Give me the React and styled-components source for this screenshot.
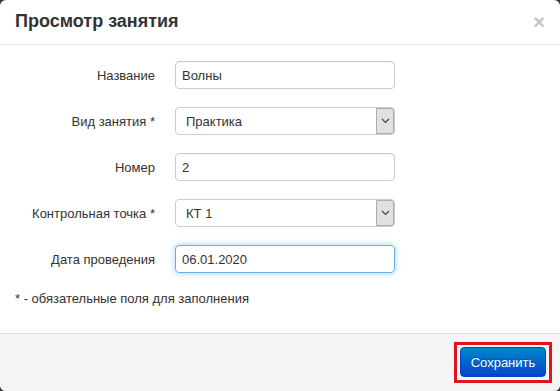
import React from "react";
import styled, { createGlobalStyle } from "styled-components";

const Global = createGlobalStyle`
  html, body { margin: 0; padding: 0; background: #3a3a3a; }
  body { font-family: "Liberation Sans", Arial, sans-serif; }
`;

const fields = [
  { label: "Название", value: "Волны" },
  { label: "Вид занятия *", value: "Практика", select: true },
  { label: "Номер", value: "2" },
  { label: "Контрольная точка *", value: "КТ 1", select: true },
  { label: "Дата проведения", value: "06.01.2020", focus: true },
];

const App = () => {
  return (
    <>
      <Global />
      <Modal>
        <Header>
          <Title>Просмотр занятия</Title>
          <Close>×</Close>
        </Header>
        <Body>
          <Form>
            {fields.map((f) => (
              <React.Fragment key={f.label}>
                <Label>{f.label}</Label>
                {f.select ? (
                  <Select>
                    <span>{f.value}</span>
                    <Arrow>
                      <svg width="9" height="6" viewBox="0 0 9 6">
                        <path d="M1 1 L4.5 4.5 L8 1" fill="none" stroke="#444" strokeWidth="1.2" />
                      </svg>
                    </Arrow>
                  </Select>
                ) : (
                  <Input $focus={f.focus}>{f.value}</Input>
                )}
              </React.Fragment>
            ))}
          </Form>
          <Note>* - обязательные поля для заполнения</Note>
        </Body>
        <Footer>
          <Highlight>
            <SaveButton>Сохранить</SaveButton>
          </Highlight>
        </Footer>
      </Modal>
    </>
  );
};

export default App;

const Modal = styled.div`
  width: 560px;
  height: 391px;
  background: #fff;
  border-radius: 6px;
  overflow: hidden;
  display: flex;
  flex-direction: column;
`;

const Header = styled.div`
  height: 44px;
  border-bottom: 1px solid #e5e5e5;
  display: flex;
  align-items: center;
  justify-content: space-between;
  padding: 0 15px;
`;

const Title = styled.h3`
  margin: 0;
  font-size: 18px;
  font-weight: bold;
  color: #333;
  padding-bottom: 1px;
`;

const Close = styled.span`
  font-size: 20px;
  font-weight: bold;
  color: #c4c4c4;
  line-height: 1;
`;

const Body = styled.div`
  flex: 1;
  padding: 16px 15px 0;
`;

const Form = styled.div`
  display: grid;
  grid-template-columns: 140px 220px;
  column-gap: 20px;
  row-gap: 18px;
  align-items: center;
`;

const Label = styled.div`
  text-align: right;
  font-size: 13px;
  color: #333;
`;

const Input = styled.div`
  box-sizing: border-box;
  height: 28px;
  border: 1px solid ${(p) => (p.$focus ? "#66afe9" : "#ccc")};
  border-radius: 4px;
  box-shadow: ${(p) => (p.$focus ? "0 0 6px rgba(102,175,233,0.6)" : "inset 0 1px 1px rgba(0,0,0,0.04)")};
  padding: 0 6px;
  display: flex;
  align-items: center;
  font-size: 13px;
  color: #333;
`;

const Select = styled.div`
  box-sizing: border-box;
  height: 28px;
  border: 1px solid #ccc;
  border-radius: 4px;
  display: flex;
  align-items: stretch;
  font-size: 13px;
  color: #333;
  span {
    flex: 1;
    display: flex;
    align-items: center;
    padding-left: 10px;
  }
`;

const Arrow = styled.div`
  width: 16px;
  background: #e1e1e1;
  border: 1px solid #adadad;
  border-radius: 0 3px 3px 0;
  display: flex;
  align-items: center;
  justify-content: center;
`;

const Note = styled.div`
  margin-top: 18px;
  font-size: 13px;
  color: #333;
`;

const Footer = styled.div`
  height: 57px;
  background: #f5f5f5;
  border-top: 1px solid #ddd;
  display: flex;
  align-items: center;
  justify-content: flex-end;
  padding: 0 8px 0 0;
`;

const Highlight = styled.div`
  border: 3px solid #e0141e;
  padding: 2px 3px 3px;
  display: flex;
`;

const SaveButton = styled.button`
  font-family: "Liberation Sans", Arial, sans-serif;
  font-size: 13px;
  color: #fff;
  height: 30px;
  width: 86px;
  padding: 0;
  border: 1px solid #04c;
  border-radius: 4px;
  background: linear-gradient(to bottom, #0088cc, #0044cc);
  text-shadow: 0 -1px 0 rgba(0, 0, 0, 0.25);
`;
